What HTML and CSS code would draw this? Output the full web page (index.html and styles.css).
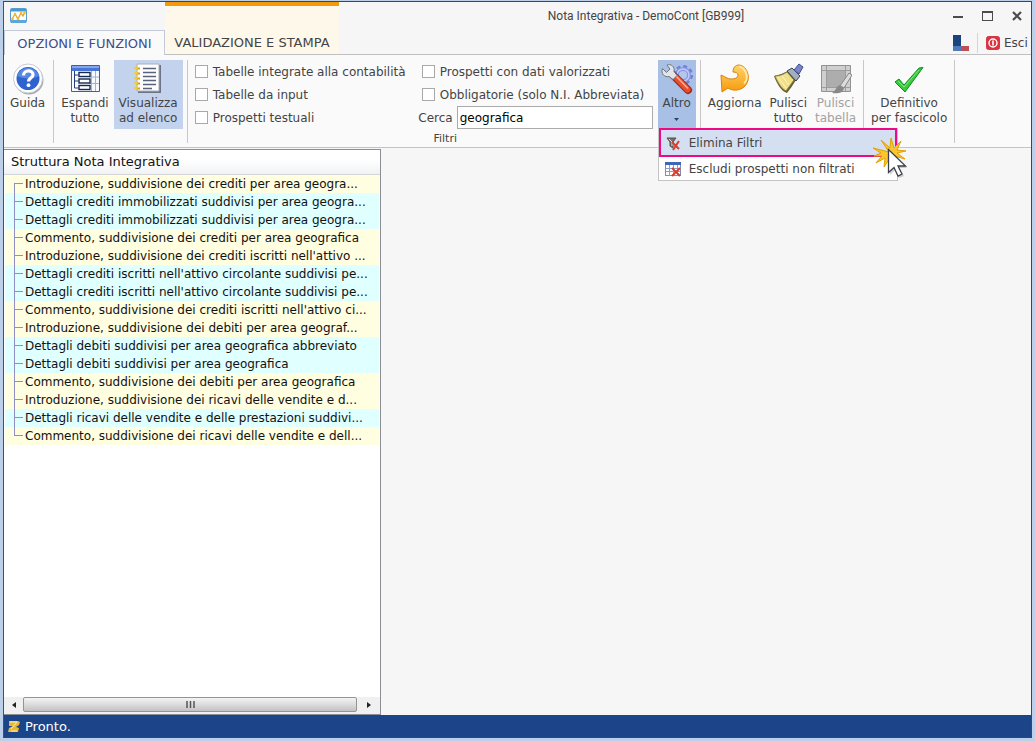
FILE: index.html
```html
<!DOCTYPE html>
<html lang="it">
<head>
<meta charset="utf-8">
<title>Nota Integrativa - DemoCont [GB999]</title>
<link rel="stylesheet" href="styles.css">
</head>
<body>
<div class="window">
  <header class="header">
    <div class="app-icon">
      <svg width="17" height="16" viewBox="0 0 17 16"><rect x=".5" y=".5" width="16" height="14" rx="1" fill="#fdfeff" stroke="#5b9bcb"/><path d="M1 1h15v2.500H1z" fill="#3f9bd8"/><path d="M1 12h15v3H1z" fill="#5aa7dc"/><path d="M2 11l3-5 3 5 3-6 2 3 2-4" fill="none" stroke="#e3a41f" stroke-width="1.300"/><g fill="#f4b92d"><circle cx="2.500" cy="11" r="1.300"/><circle cx="5" cy="6" r="1.300"/><circle cx="8" cy="11" r="1.300"/><circle cx="11" cy="5" r="1.300"/><circle cx="14.500" cy="5" r="1.300"/></g></svg>
    </div>
    <button class="tab tab-active" type="button">OPZIONI E FUNZIONI</button>
    <button class="tab tab-context" type="button">VALIDAZIONE E STAMPA</button>
    <h1 class="title">Nota Integrativa - DemoCont [GB999]</h1>
    <div class="controls">
      <button type="button" aria-label="Riduci a icona"><svg width="10" height="12"><path d="M0 7h10" stroke="#4c4c50" stroke-width="2"/></svg></button>
      <button type="button" aria-label="Ingrandisci"><svg width="11" height="11"><rect x=".5" y=".5" width="10" height="9" fill="none" stroke="#4c4c50"/><path d="M0 1h11" stroke="#4c4c50" stroke-width="2"/></svg></button>
      <button type="button" aria-label="Chiudi"><svg width="10" height="10"><path d="M1 1l8 8M9 1l-8 8" stroke="#4c4c50" stroke-width="2.200"/></svg></button>
    </div>
    <div class="tools">
      <svg width="16" height="16"><path d="M0 0h8v11H0z" fill="#1b447f"/><path d="M0 11h8v5H0z" fill="#4f79bb"/><path d="M8 11h8v5H8z" fill="#bf4f55"/></svg>
      <button class="exit" type="button"><svg width="14" height="14"><rect x=".5" y=".5" width="13" height="13" rx="2" fill="#e0303f" stroke="#cf3a45"/><circle cx="7" cy="7" r="4" fill="none" stroke="#fff" stroke-width="1.400"/><path d="M7 4.500v5" stroke="#fff" stroke-width="1.600"/></svg>Esci</button>
    </div>
  </header>

  <div class="ribbon">
    <div class="group">
      <button class="cmd" type="button">
        <svg width="32" height="32" viewBox="0 0 32 32"><circle cx="17" cy="17" r="14.500" fill="#a5a9ae"/><circle cx="16" cy="15.500" r="14.500" fill="#fff" stroke="#c5cbd3"/><circle cx="16" cy="15.500" r="11.500" fill="#2e62cf"/><path d="M5 13a11.500 11.500 0 0 1 22 0q-10 5-22 0z" fill="#5688e4"/><path d="M11.500 12.500c0-6 9.500-6 9.500-.8 0 3.300-4.500 3-4.500 6.800" fill="none" stroke="#fff" stroke-width="3.200"/><circle cx="16.500" cy="22.200" r="1.900" fill="#fff"/></svg>
        <span>Guida</span>
      </button>
    </div>
    <div class="group">
      <button class="cmd" type="button">
        <svg width="32" height="32" viewBox="0 0 32 32"><path d="M2.500 2.500h28v26h-28z" fill="#f7fafe" stroke="#405f9c"/><path d="M3 3h27v5H3z" fill="#4974d8"/><path d="M3 3h27v2H3z" fill="#83a5ee"/><path d="M22.500 8v20M26.500 8v20M20 14h10M20 20.500h10" stroke="#9cb3da"/><path d="M5.500 8v17h4M5.500 12h4M5.500 18h4" fill="none" stroke="#233f75"/><g fill="#fff" stroke="#172a50" stroke-width="1.400"><rect x="10" y="9.500" width="11" height="4"/><rect x="10" y="16" width="11" height="4"/><rect x="10" y="22.500" width="11" height="4"/></g></svg>
        <span>Espandi<br>tutto</span>
      </button>
      <button class="cmd cmd-on" type="button">
        <svg width="32" height="32" viewBox="0 0 32 32"><path d="M6 2h23v28H6z" fill="#6c7587"/><path d="M5 1h22v27H5z" fill="#fdfdfd" stroke="#a7aebb"/><path d="M11 5.500h13M11 9.500h13M11 13.500h13M11 17.500h13M11 21.500h13M11 25.500h9" stroke="#58637c" stroke-width="1.300"/><path d="M4 5.500h4M4 10.500h4M4 15.500h4M4 20.500h4M4 25.500h4" stroke="#d5a60e" stroke-width="2"/><g fill="#f4cd35"><circle cx="4" cy="5" r="1.800"/><circle cx="4" cy="10" r="1.800"/><circle cx="4" cy="15" r="1.800"/><circle cx="4" cy="20" r="1.800"/><circle cx="4" cy="25" r="1.800"/></g></svg>
        <span>Visualizza<br>ad elenco</span>
      </button>
    </div>
    <div class="group group-filters">
      <div class="filters">
        <label><input type="checkbox">Tabelle integrate alla contabilità</label>
        <label><input type="checkbox">Prospetti con dati valorizzati</label>
        <label><input type="checkbox">Tabelle da input</label>
        <label><input type="checkbox">Obbligatorie (solo N.I. Abbreviata)</label>
        <label><input type="checkbox">Prospetti testuali</label>
        <div class="search"><label for="cerca">Cerca</label><input id="cerca" type="text" value="geografica"></div>
      </div>
      <div class="more">
        <button class="cmd cmd-open" type="button" aria-expanded="true">
          <svg width="32" height="32" viewBox="0 0 32 32"><circle cx="22" cy="12" r="8.500" fill="none" stroke="#6f80dc" stroke-width="3" stroke-dasharray="3.800 2.880"/><circle cx="22" cy="12" r="6" fill="#b4c6ea" stroke="#8595e6" stroke-width="4"/><circle cx="22" cy="12" r="6" fill="none" stroke="#c3ccf6" stroke-width="1.500"/><path d="M12 12l15 15" stroke="#9c2a18" stroke-width="8" stroke-linecap="round"/><path d="M12.500 12l14 14.500" stroke="#ea4d2c" stroke-width="6" stroke-linecap="round"/><path d="M13 11l14 14.500" stroke="#ffae8d" stroke-width="1.600"/><path d="M1.500 5.500c-2 5 2 9 6.500 8l4 3 4-4-3-4c1-5-3-8-7-6.500l3 4-3.500 3.500z" fill="#e3e6e9" stroke="#70747b"/></svg>
          <span>Altro</span>
          <svg class="caret" width="5" height="3"><path d="M0 0h5L2.500 3z" fill="#32415f"/></svg>
        </button>
        <div class="menu">
          <button class="item item-hot" type="button"><svg width="16" height="16"><path d="M2 3h9L8 7v6l-3-2V7z" fill="#74716c" stroke="#53504d"/><path d="M4 4l3 3v4" fill="none" stroke="#e4e2dc"/><path d="M7 7l7 7M14 6l-6 9" stroke="#da3e2b" stroke-width="2"/></svg>Elimina Filtri</button>
          <button class="item" type="button"><svg width="16" height="16"><rect x=".5" y="1.500" width="15" height="13" fill="#fff" stroke="#7890ba"/><path d="M0 1h16v3H0z" fill="#3f66b7"/><path d="M1 7.500h14M1 10.500h14M4.500 4v11M8.500 4v11M12.500 4v11" stroke="#8ba0c7"/><path d="M7 7l8 8M15 7l-8 8" stroke="#dc3a2e" stroke-width="2"/></svg>Escludi prospetti non filtrati</button>
          <svg class="pointer" width="36" height="42" viewBox="0 0 36 42"><path d="M16 15L8 3l9 8 1-10 3 10 7-7-4 9 9 1-9 2 8 6-10-3 1 8-6-6-6 9 1-9-9 5 6-7-8 0 7-3-8-5z" fill="#fbc62c" stroke="#e3a000"/><path d="M17 14v24l5-5 4 8 5-2-5-8h8z" fill="#777" opacity=".35"/><path d="M15.500 12.500v23l5.500-5 4 8.500 4-2-4-8h7.500z" fill="#fff" stroke="#3a3f49" stroke-width="1.300"/></svg>
        </div>
      </div>
      <div class="caption">Filtri</div>
    </div>
    <div class="group">
      <button class="cmd" type="button">
        <svg width="32" height="32" viewBox="0 0 32 32"><defs><linearGradient id="gold" x2="0" y2="1"><stop stop-color="#ffd36b"/><stop offset="1" stop-color="#f79a0b"/></linearGradient></defs><path d="M2 12l6 3c4 2 11 1 11-3 0-2-2-3-5-3 0-4 2-7 6-7 9 1 13 15 5 22-5 4-12 4-16 1l-6 4z" fill="url(#gold)" stroke="#d7830b"/><path d="M20 3.500c8 2 10 12 5 17" fill="none" stroke="#ffe7a2" stroke-width="2"/></svg>
        <span>Aggiorna</span>
      </button>
      <button class="cmd" type="button">
        <svg width="32" height="32" viewBox="0 0 32 32"><path d="M2 13c6-1 9-3 14-5l8 9c-3 5-6 9-9 13-6-2-10-9-13-17z" fill="#605d34"/><path d="M3 13c5 0 9-2 12-4l7 8c-3 4-5 7-8 11-5-3-8-8-11-15z" fill="#efe18b" stroke="#91803e"/><path d="M6 14l8 11M10 13l7 9" stroke="#fff5bc"/><path d="M15 8l5-3 8 8-4 5z" fill="#a3aeba" stroke="#37445b"/><path d="M22 7l5-6 4 3-4 7z" fill="#7985c9" stroke="#414d8d"/></svg>
        <span>Pulisci<br>tutto</span>
      </button>
      <button class="cmd" type="button" disabled>
        <svg width="32" height="32" viewBox="0 0 32 32"><path d="M1.500 2.500h29v26h-29z" fill="#cfcfcf" stroke="#929292"/><path d="M2 7.500h28M2 24.500h28M6.500 3v25M25.500 3v25" stroke="#9d9d9d"/><path d="M7 8h18v16H7z" fill="#adadad"/><path d="M29 10l3 2-8 13-4-2z" fill="#ddd" stroke="#888"/><path d="M20 22l4 3c-1 5-6 6-12 5 4-2 4-7 8-8z" fill="#888"/></svg>
        <span>Pulisci<br>tabella</span>
      </button>
    </div>
    <div class="group">
      <button class="cmd" type="button">
        <svg width="32" height="32" viewBox="0 0 32 32"><path d="M2 19l4-3 5 6L26 5l4-.5L12 29z" fill="#37cb3d" stroke="#138a22"/><path d="M5 18l6 6L26 7" fill="none" stroke="#7ceb78"/></svg>
        <span>Definitivo<br>per fascicolo</span>
      </button>
    </div>
  </div>

  <main class="main">
    <section class="panel">
      <h2 class="panel-title">Struttura Nota Integrativa</h2>
      <ul class="tree">
        <li>Introduzione, suddivisione dei crediti per area geogra...</li>
        <li class="detail">Dettagli crediti immobilizzati suddivisi per area geogra...</li>
        <li class="detail">Dettagli crediti immobilizzati suddivisi per area geogra...</li>
        <li>Commento, suddivisione dei crediti per area geografica</li>
        <li>Introduzione, suddivisione dei crediti iscritti nell'attivo ...</li>
        <li class="detail">Dettagli crediti iscritti nell'attivo circolante suddivisi pe...</li>
        <li class="detail">Dettagli crediti iscritti nell'attivo circolante suddivisi pe...</li>
        <li>Commento, suddivisione dei crediti iscritti nell'attivo ci...</li>
        <li>Introduzione, suddivisione dei debiti per area geograf...</li>
        <li class="detail">Dettagli debiti suddivisi per area geografica abbreviato</li>
        <li class="detail">Dettagli debiti suddivisi per area geografica</li>
        <li>Commento, suddivisione dei debiti per area geografica</li>
        <li>Introduzione, suddivisione dei ricavi delle vendite e d...</li>
        <li class="detail">Dettagli ricavi delle vendite e delle prestazioni suddivi...</li>
        <li>Commento, suddivisione dei ricavi delle vendite e dell...</li>
      </ul>
      <div class="scrollbar">
        <button type="button" aria-label="Scorri a sinistra"><svg width="4" height="6"><path d="M4 0v6L0 3z" fill="#222"/></svg></button>
        <div class="thumb"><svg width="9" height="7"><path d="M1 0v7M4.500 0v7M8 0v7" stroke="#555" stroke-width="1.500"/></svg></div>
        <button type="button" aria-label="Scorri a destra"><svg width="4" height="6"><path d="M0 0v6l4-3z" fill="#222"/></svg></button>
      </div>
    </section>
  </main>

  <footer class="status">
    <svg width="12" height="12"><path d="M1 1h9l2 1-1 3-3 2 3 1-1 4H0l1-4 4-2H1z" fill="#e9b736"/><path d="M2 2h7L3 9M3 11h6" fill="none" stroke="#fff0a8"/></svg>
    <span>Pronto.</span>
  </footer>
</div>
</body>
</html>
```
FILE: styles.css
```css
* { box-sizing: border-box; }

body {
  margin: 0;
  min-height: 100vh;
  display: flex;
  padding: 1px 3px 3px 3px;
  background: #bdd0ea;
  font-family: Verdana, "DejaVu Sans", sans-serif;
  font-size: 12px;
  color: #444;
}

button, input {
  font: inherit;
  color: inherit;
}

button {
  border: 0;
  padding: 0;
  background: none;
}

svg {
  display: block;
  flex: none;
}

.window {
  flex: 1;
  display: flex;
  flex-direction: column;
  min-width: 0;
  border: 1px solid #1f4c87;
  border-left-color: #2f4fa0;
  background: #f6f6f6;
}

/* Title bar and tab strip */
.header {
  display: grid;
  grid-template-columns: 161px 174px 1fr auto;
  grid-template-rows: 28px 25px;
  background: linear-gradient(#c0c0c0, #c0c0c0) bottom / 100% 1px no-repeat;
}

.app-icon {
  grid-area: 1 / 1;
  padding: 6px 0 0 6px;
}

.tab {
  font-size: 13px;
}

.tab-active {
  grid-area: 2 / 1;
  border: 1px solid #c4cbd8;
  border-bottom: 0;
  background: #fafafa;
  color: #3c4f8a;
}

.tab-context {
  grid-area: 1 / 2 / 3 / 3;
  border-top: 4px solid #f29a0c;
  border-bottom: 1px solid #c0c0c0;
  padding-top: 24px;
  background: #fef8ea;
}

.title {
  grid-area: 1 / 3;
  align-self: center;
  margin: 0;
  text-align: center;
  font: 12px "Segoe UI", Roboto, sans-serif;
}

.controls {
  grid-area: 1 / 4;
  display: flex;
  align-items: center;
  justify-content: flex-end;
  gap: 19px;
  padding-right: 9px;
}

.tools {
  grid-area: 2 / 4;
  display: flex;
  align-items: center;
  gap: 8px;
  padding-right: 3px;
}

.exit {
  display: flex;
  align-items: center;
  gap: 4px;
  padding: 3px 0 3px 8px;
  border-left: 1px solid #d4d4d4;
}

/* Ribbon */
.ribbon {
  display: flex;
  height: 93px;
  padding: 5px 0 4px;
  border-bottom: 1px solid #c4c4c4;
  background: #fafafa;
}

.group {
  display: flex;
  align-items: flex-start;
  gap: 2px;
  padding: 0 4px;
  border-right: 1px solid #c8c8c8;
}

.group:first-child { padding: 0 5px 0 3px; }

.cmd {
  display: flex;
  flex-direction: column;
  align-items: center;
  gap: 1px;
  min-height: 69px;
  padding: 3px 3px 0;
  line-height: 15px;
}

.cmd-on {
  padding: 3px 5px 0;
  background: #c3d3ee;
}

.cmd-open { background: #a9c0e6; }
.cmd:disabled { color: #a3a3a3; }
.caret { margin-top: 6px; }

.group-filters {
  display: grid;
  grid-template-columns: auto auto;
  gap: 0 3px;
  align-content: space-between;
  padding: 0 4px 0 7px;
}

.filters {
  display: grid;
  grid-template-columns: 220px 233px;
  grid-auto-rows: 23px;
  column-gap: 7px;
}

.filters label {
  display: flex;
  align-items: center;
  gap: 5px;
  white-space: nowrap;
}

.filters input[type="checkbox"] {
  appearance: none;
  width: 13px;
  height: 13px;
  margin: 0;
  border: 1px solid #a9a9a9;
  background: #fff;
}

.search {
  display: flex;
  align-items: center;
  justify-content: flex-end;
  gap: 4px;
  padding-right: 2px;
}

.search input {
  flex: none;
  width: 196px;
  height: 23px;
  padding: 0 2px;
  border: 1px solid #ababab;
  background: #fff;
  color: #000;
}

.caption {
  grid-column: 1 / -1;
  text-align: center;
  font-size: 11px;
  line-height: 8px;
}

.more { position: relative; }

.menu {
  position: absolute;
  z-index: 1;
  top: 68px;
  left: 0;
  width: 240px;
  border: solid #c4c4c4;
  border-width: 0 1px 1px;
  background: #fff;
}

.item {
  display: flex;
  align-items: center;
  gap: 8px;
  width: 100%;
  height: 23px;
  padding: 0 6px;
  white-space: nowrap;
}

.item-hot {
  height: 29px;
  outline: 2px solid #ee0a86;
  outline-offset: -2px;
  background: #d5dff2;
}

.pointer {
  position: absolute;
  top: 9px;
  right: -12px;
}

/* Content */
.main {
  flex: 1;
  display: flex;
  padding-top: 1px;
}

.panel {
  display: flex;
  flex-direction: column;
  width: 377px;
  border: 1px solid #8b8e94;
  border-left: 0;
  background: #fff;
  color: #111;
}

.panel-title {
  margin: 0;
  padding: 0 7px;
  border-bottom: 1px solid #d5d5d5;
  background: linear-gradient(#fff 40%, #f1f2f4);
  font-size: 13px;
  font-weight: 400;
  line-height: 24px;
}

.tree {
  flex: 1;
  margin: 0;
  padding: 0 1px;
  list-style: none;
}

.tree li {
  height: 18px;
  padding-left: 20px;
  background:
    linear-gradient(#8f8fc4, #8f8fc4) 9px 0 / 1px 100% no-repeat,
    linear-gradient(#8f8fc4, #8f8fc4) 9px 8px / 9px 1px no-repeat,
    #fffee1;
  line-height: 18px;
  white-space: nowrap;
}

.tree .detail { background-color: #e0ffff; }
.tree li:first-child { background-position: 9px 8px, 9px 8px, 0 0; }
.tree li:last-child { background-size: 1px 9px, 9px 1px, auto; }

.scrollbar {
  display: flex;
  height: 17px;
  padding-bottom: 2px;
  background: #f0f0f0;
}

.scrollbar button {
  display: grid;
  place-items: center;
  width: 19px;
}

.scrollbar button:last-child { width: 23px; }

.thumb {
  flex: 1;
  display: grid;
  place-items: center;
  border: 1px solid #949494;
  border-radius: 2px;
  background: linear-gradient(#f4f4f4, #dcdcdc 50%, #c2c2c6);
}

.status {
  display: flex;
  align-items: center;
  gap: 5px;
  height: 22px;
  padding: 0 4px;
  background: #1b4489;
  color: #fff;
  font-size: 13px;
}
```
